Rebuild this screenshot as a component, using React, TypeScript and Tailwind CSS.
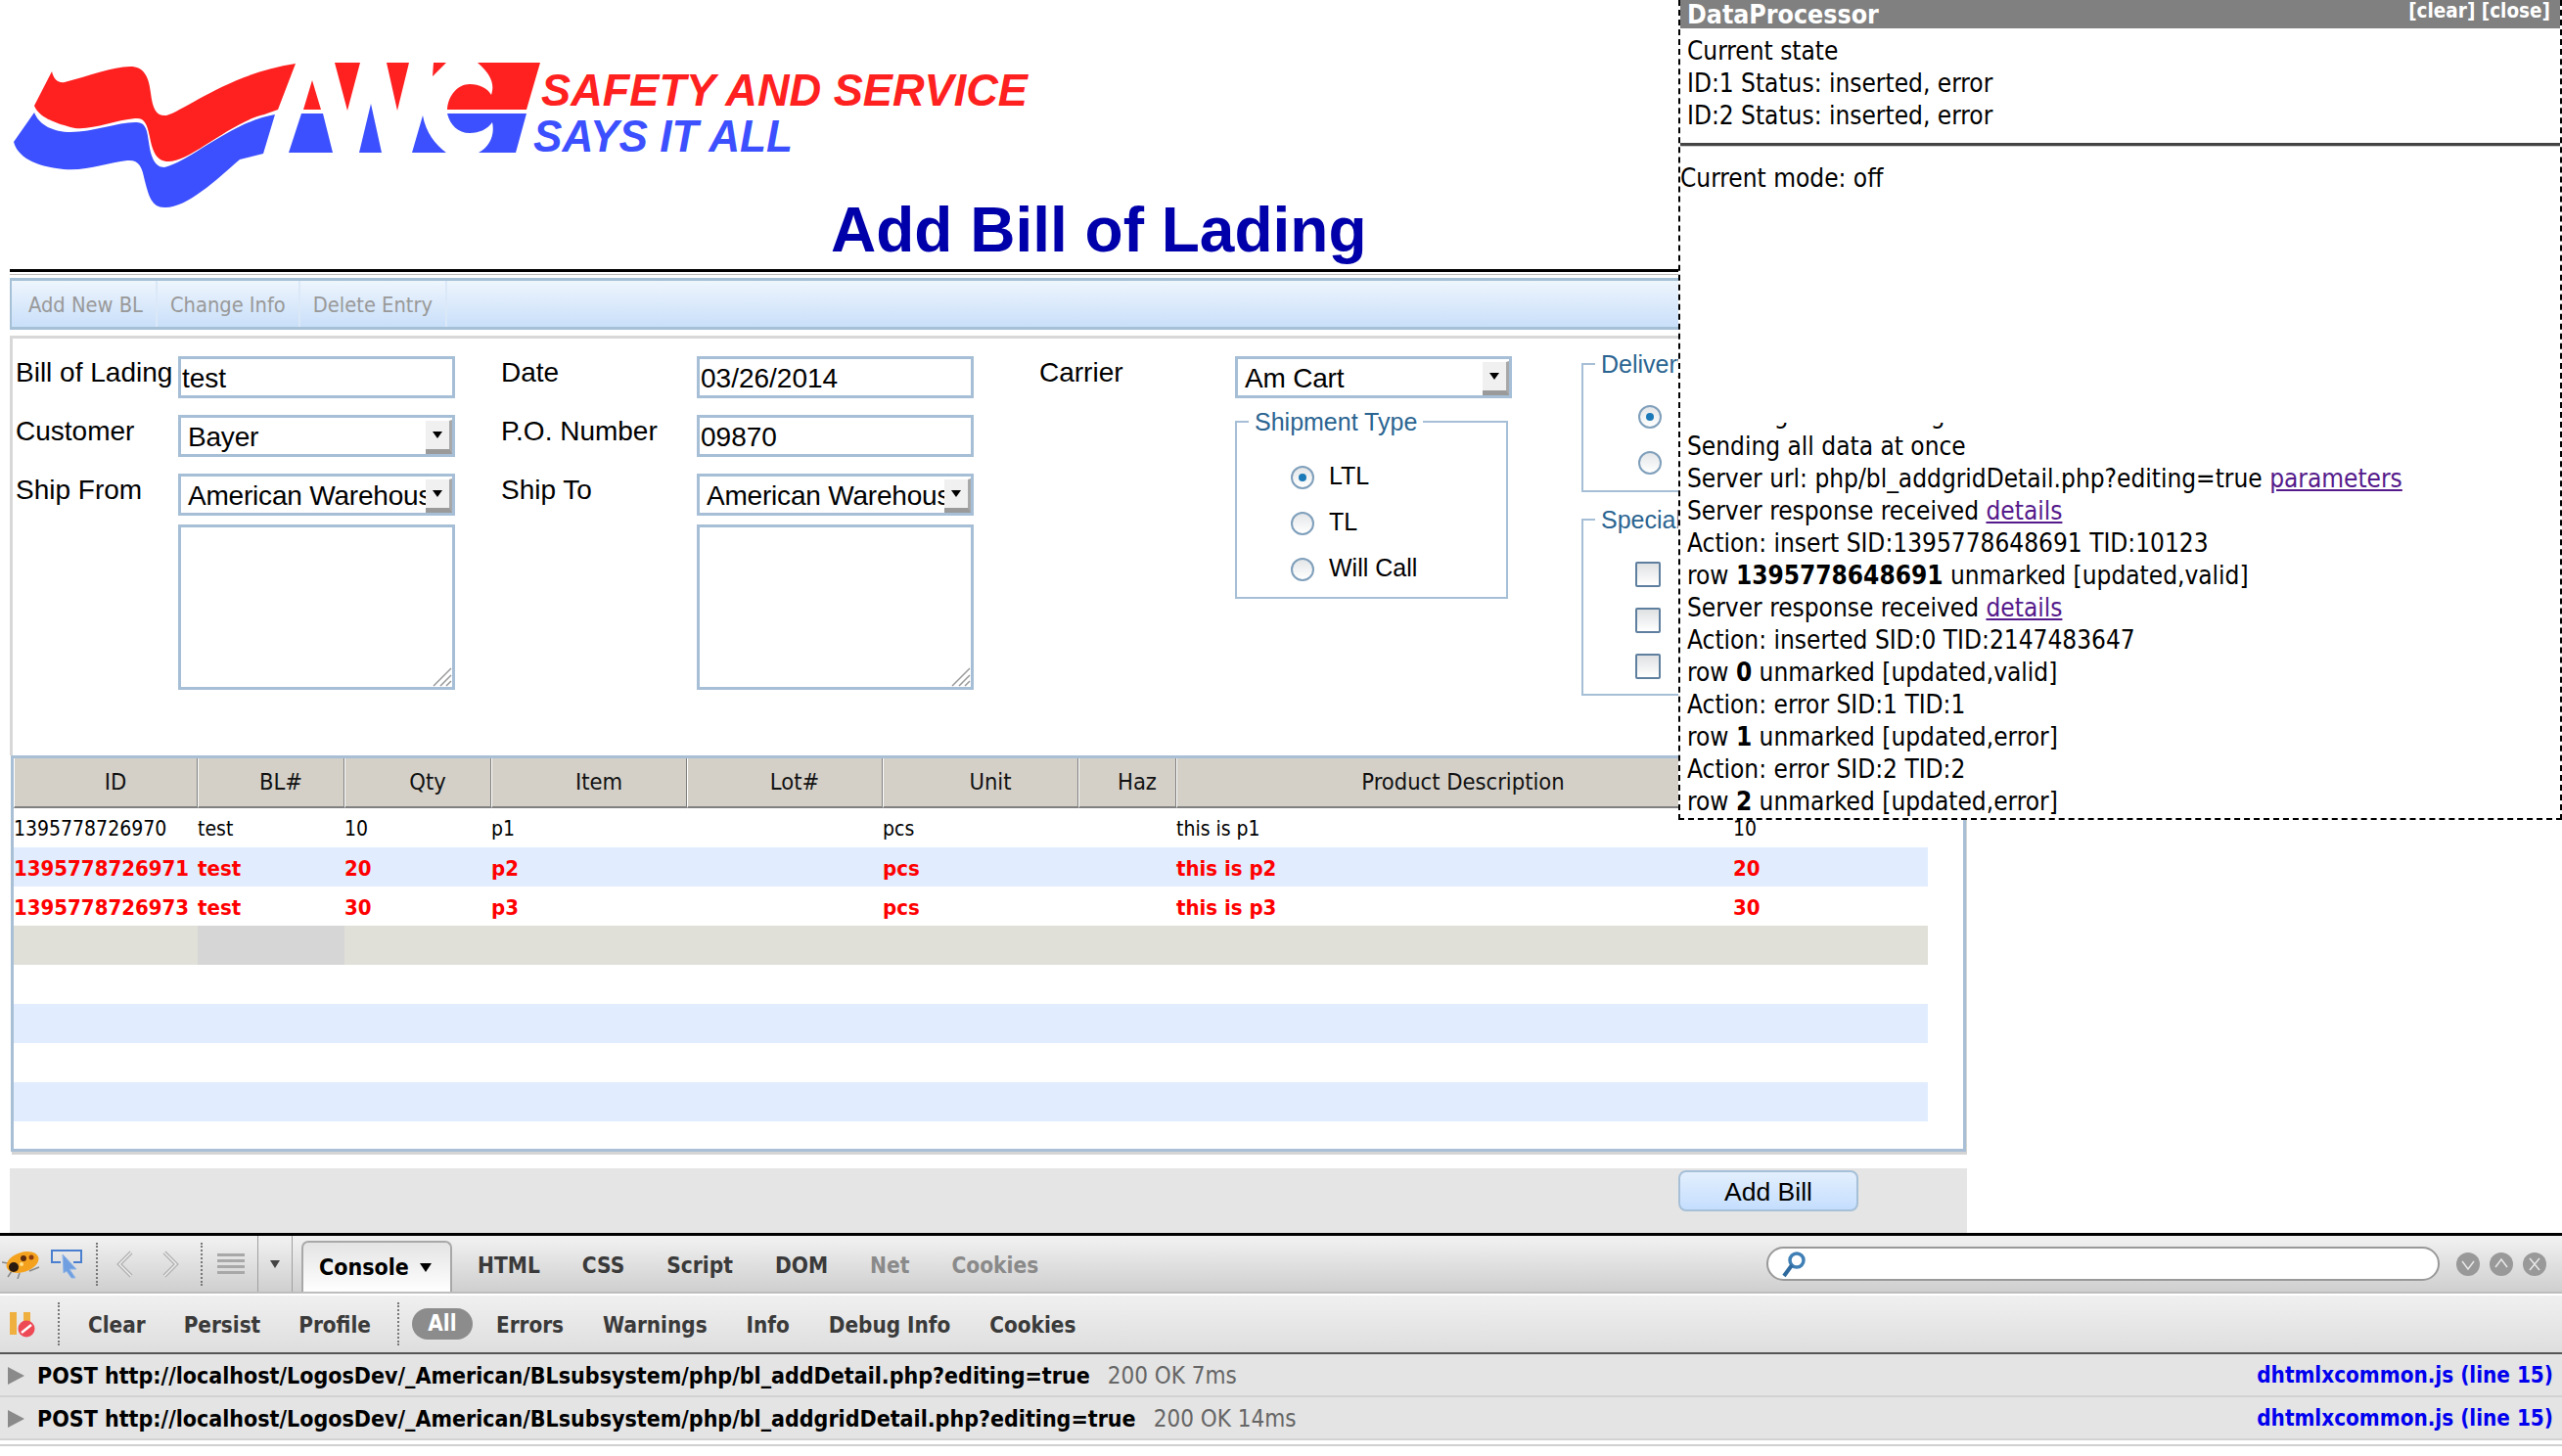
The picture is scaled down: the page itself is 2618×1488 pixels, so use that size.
import React from 'react';

const tahoma = "font-['DejaVu_Sans_Condensed','DejaVu_Sans',sans-serif]";

const columns = ['ID', 'BL#', 'Qty', 'Item', 'Lot#', 'Unit', 'Haz', 'Product Description'];

const rows = [
  { id: '1395778726970', bl: 'test', qty: '10', item: 'p1', unit: 'pcs', desc: 'this is p1', last: '10', err: false },
  { id: '1395778726971', bl: 'test', qty: '20', item: 'p2', unit: 'pcs', desc: 'this is p2', last: '20', err: true },
  { id: '1395778726973', bl: 'test', qty: '30', item: 'p3', unit: 'pcs', desc: 'this is p3', last: '30', err: true },
];

function Logo() {
  return (
    <svg width="1060" height="152" viewBox="0 64 1060 152" className="block">
      {/* waves */}
      <path fill="#ff2020" d="M53 73 C55 82 60 85 66 84 C90 78 115 68 133 68 C147 68 152 78 154 95 C156 112 160 119 170 118 C190 112 235 75 302 65 L284 112 L270 117 C235 125 195 165 172 165 C160 165 156 155 153 140 C150 125 147 120 138 121 C115 123 90 135 72 130 C55 125 40 120 35 108 Z" />
      <path fill="#3c50ff" d="M35 115 C40 128 55 135 72 135 C95 135 120 125 138 125 C148 125 150 130 152 145 C154 160 158 171 168 171 C195 165 235 125 281 117 L269 157 L245 163 C220 185 190 213 168 212 C155 212 152 200 148 185 C145 170 142 163 130 164 C110 166 90 175 65 173 C35 170 18 160 14 145 Z" />
      {/* AWC, red half */}
      <path fill="#ff2020" d="M319 82 L310 112 L328 112 Z M342 64 L368 64 L355 113 Z M395 64 L418 64 L406 113 Z M443 64 L456 64 L442 78 Z" />
      <path fill="#ff2020" d="M488 64 L552 64 L538 112 L457 112 C458 97 468 86 480 86 C490 86 498 90 502 97 C505 88 504 78 488 64 Z" />
      {/* AWC, blue half */}
      <path fill="#3c50ff" d="M308 116 L330 116 L340 156 L295 156 Z M379 106 L390 156 L367 156 Z M432 118 C435 135 445 148 456 156 L421 156 Z" />
      <path fill="#3c50ff" d="M457 116 L538 116 L527 156 L489 156 C500 150 506 138 503 125 C498 132 490 136 480 136 C468 136 460 128 457 116 Z" />
      <text x="553" y="108" fill="#ff2020" fontFamily="Liberation Sans" fontWeight="700" fontStyle="italic" fontSize="46" textLength="497" lengthAdjust="spacingAndGlyphs">SAFETY AND SERVICE</text>
      <text x="545" y="155" fill="#3c50ff" fontFamily="Liberation Sans" fontWeight="700" fontStyle="italic" fontSize="46" textLength="265" lengthAdjust="spacingAndGlyphs">SAYS IT ALL</text>
    </svg>
  );
}

function Field({ value }: { value: string }) {
  return (
    <div className="h-[43px] w-[283px] overflow-hidden border-[3px] border-[#a6bfd6] bg-white pl-[1px] text-[28px] leading-[39px]">
      {value}
    </div>
  );
}

function Select({ value }: { value: string }) {
  return (
    <div className="relative h-[43px] w-[283px] overflow-hidden border-[3px] border-[#a6bfd6] bg-white pl-[7px] text-[28px] leading-[39px] tracking-[-0.2px]">
      <span className="whitespace-nowrap">{value}</span>
      <span className="absolute right-0 top-[2px] flex h-[35px] w-[27px] items-center justify-center border-b-[5px] border-r-[3px] border-t border-b-[#9a9a9a] border-r-[#a8a8a8] border-t-white bg-[#f0f0f0]">
        <span className="h-0 w-0 border-x-[5px] border-t-[7px] border-x-transparent border-t-black" />
      </span>
    </div>
  );
}

function TextBox() {
  return (
    <div className="relative h-[169px] w-[283px] border-[3px] border-[#a6bfd6] bg-white">
      <svg width="20" height="20" viewBox="0 0 20 20" className="absolute bottom-0 right-0">
        <path d="M19 1 L1 19 M19 8 L8 19 M19 14 L14 19" stroke="#999" strokeWidth="1.5" fill="none" />
      </svg>
    </div>
  );
}

function Radio({ on }: { on?: boolean }) {
  return (
    <span className="flex h-[24px] w-[24px] shrink-0 items-center justify-center rounded-full border-[2px] border-[#7f9fbb] bg-gradient-to-b from-[#e4e6e8] to-white">
      {on && <span className="h-[8px] w-[8px] rounded-full bg-[#1d7ab8]" />}
    </span>
  );
}

function Check() {
  return <span className="block h-[26px] w-[26px] rounded-[2px] border-[2px] border-[#5f7f9f] bg-gradient-to-b from-[#dfe1e3] to-white" />;
}

function Dotted({ h }: { h: string }) {
  return <span className={`block w-0 border-l-2 border-dotted border-[#777] ${h}`} />;
}

function BugIcon() {
  return (
    <svg width="40" height="30" viewBox="0 0 40 30">
      <path d="M6 14 L0 13 M10 22 L6 28 M18 24 L16 30 M28 22 L38 18" stroke="#888" strokeWidth="1.5" />
      <ellipse cx="21" cy="13" rx="17" ry="10" transform="rotate(-18 21 13)" fill="#f4a21e" />
      <circle cx="12" cy="18" r="5" fill="#2a1a10" />
      <circle cx="22" cy="9" r="3" fill="#5a2a10" />
      <circle cx="30" cy="8" r="2.5" fill="#8a3a10" />
      <circle cx="20" cy="15" r="2" fill="#ffe08a" />
    </svg>
  );
}

function InspectIcon() {
  return (
    <svg width="32" height="30" viewBox="0 0 32 30">
      <path d="M10 13 H1 V1 H31 V13 H23" fill="none" stroke="#4a7fd0" strokeWidth="2" />
      <path d="M12 5 L26 20 L19 20 L25 29 L21 29 L16 22 L13 24 Z" fill="#6f9fe0" stroke="#8fb4e8" strokeWidth="1" />
    </svg>
  );
}

function Chevron({ left }: { left?: boolean }) {
  return (
    <svg width="18" height="28" viewBox="0 0 18 28">
      <path d={left ? 'M15 2 L3 14 L15 26' : 'M3 2 L15 14 L3 26'} fill="none" stroke="#b0b0b0" strokeWidth="4" />
      <path d={left ? 'M15 2 L3 14 L15 26' : 'M3 2 L15 14 L3 26'} fill="none" stroke="#ececec" strokeWidth="1.5" />
    </svg>
  );
}

function RoundBtn({ d }: { d: string }) {
  return (
    <svg width="24" height="24" viewBox="0 0 24 24">
      <circle cx="12" cy="12" r="12" fill="#999" />
      <path d={d} fill="none" stroke="#e8e8e8" strokeWidth="1.5" />
    </svg>
  );
}

function Firebug() {
  return (
    <div className={`${tahoma} shrink-0 border-t-[3px] border-black font-bold text-[#3a3a3a]`}>
      <div className="flex h-[59px] items-stretch border-b-[2px] border-[#bdbdbd] bg-gradient-to-b from-[#f2f2f2] to-[#cfcfcf]">
        <div className="flex w-[308px] shrink-0 items-center">
          <div className="ml-[2px] w-[50px]"><BugIcon /></div>
          <InspectIcon />
          <div className="ml-[14px]"><Dotted h="h-[44px]" /></div>
          <div className="ml-[19px]"><Chevron left /></div>
          <div className="ml-[28px]"><Chevron /></div>
          <div className="ml-[22px]"><Dotted h="h-[44px]" /></div>
          <div className="ml-[15px] flex w-[28px] flex-col gap-[3px]">
            <span className="h-[3px] bg-[#a8a8a8]" />
            <span className="h-[3px] bg-[#a8a8a8]" />
            <span className="h-[3px] bg-[#a8a8a8]" />
            <span className="h-[3px] bg-[#a8a8a8]" />
          </div>
          <span className="ml-[13px] h-full w-px bg-[#a0a0a0]" />
          <span className="ml-[12px] h-0 w-0 border-x-[5px] border-t-[8px] border-x-transparent border-t-[#444]" />
          <span className="ml-[12px] h-full w-px bg-[#a0a0a0]" />
        </div>
        <div className="mt-[5px] flex w-[154px] shrink-0 items-center gap-[11px] rounded-t-[7px] border-[2px] border-b-0 border-[#a8a8a8] bg-gradient-to-b from-[#e4e4e4] to-white pl-[16px] text-[23px] text-black">
          Console
          <span className="h-0 w-0 border-x-[6px] border-t-[9px] border-x-transparent border-t-black" />
        </div>
        <div className="ml-[26px] flex items-center gap-[43px] pt-[4px] text-[22.5px]">
          <span>HTML</span>
          <span>CSS</span>
          <span>Script</span>
          <span>DOM</span>
          <span className="text-[#8a8a8a]">Net</span>
          <span className="text-[#8a8a8a]">Cookies</span>
        </div>
        <div className="ml-auto flex items-center pr-[16px]">
          <div className="relative h-[35px] w-[688px] rounded-full border-[2px] border-[#999] bg-white">
            <svg width="26" height="28" viewBox="0 0 26 28" className="absolute left-[13px] top-[2px]">
              <circle cx="16" cy="10" r="7" fill="#fff" stroke="#3f7fb5" strokeWidth="3.5" />
              <path d="M11 15 L3 26" stroke="#2f6a9f" strokeWidth="4" />
            </svg>
          </div>
          <div className="ml-[17px] flex gap-[10px]">
            <RoundBtn d="M6 9 L12 17 L18 9" />
            <RoundBtn d="M6 15 L12 7 L18 15" />
            <RoundBtn d="M7 6 L17 18 M17 6 L7 18" />
          </div>
        </div>
      </div>
      <div className="mt-[2px] flex h-[58px] items-center bg-gradient-to-b from-[#f0f0f0] to-[#dedede] text-[22.3px]">
        <svg width="28" height="28" viewBox="0 0 28 28" className="ml-[8px]">
          <rect x="2" y="2" width="7" height="23" fill="#f0b040" />
          <rect x="16" y="2" width="7" height="23" fill="#f0b040" />
          <circle cx="19" cy="19" r="8.5" fill="#ee4a55" />
          <path d="M14 23 L24 15" stroke="#fff" strokeWidth="2.5" />
        </svg>
        <div className="ml-[23px]"><Dotted h="h-[44px]" /></div>
        <div className="ml-[29px] flex items-center gap-[39px] pt-[3px]">
          <span>Clear</span>
          <span>Persist</span>
          <span>Profile</span>
        </div>
        <div className="ml-[27px]"><Dotted h="h-[44px]" /></div>
        <span className="ml-[13px] flex h-[32px] w-[62px] items-center justify-center rounded-full bg-[#8c8c8c] text-white">All</span>
        <div className="ml-[24px] flex items-center gap-[40px] pt-[3px]">
          <span>Errors</span>
          <span>Warnings</span>
          <span>Info</span>
          <span>Debug Info</span>
          <span>Cookies</span>
        </div>
      </div>
      <div className="border-t-[2px] border-[#555] text-[23px] text-black">
        <LogRow url="POST http://localhost/LogosDev/_American/BLsubsystem/php/bl_addDetail.php?editing=true" status="200 OK 7ms" />
        <LogRow url="POST http://localhost/LogosDev/_American/BLsubsystem/php/bl_addgridDetail.php?editing=true" status="200 OK 14ms" />
      </div>
      <div className="mt-[4px] h-[2px] bg-[#d0d0d0]" />
    </div>
  );
}

function LogRow({ url, status }: { url: string; status: string }) {
  return (
    <div className="flex h-[44px] items-center border-b-[2px] border-[#d2d2d2] bg-[#e4e4e4] pl-[8px] pr-[9px] pt-[2px]">
      <span className="h-0 w-0 border-y-[9px] border-l-[17px] border-y-transparent border-l-[#8a8a8a]" />
      <span className="ml-[13px] whitespace-nowrap">{url}</span>
      <span className="ml-[18px] text-[24px] font-normal text-[#666]">{status}</span>
      <span className="ml-auto text-[22.3px] text-[#0000ee]">dhtmlxcommon.js (line 15)</span>
    </div>
  );
}

function DebugPanel() {
  const link = 'text-[#551a8b] underline';
  return (
    <div className={`${tahoma} absolute right-0 top-0 flex h-[838px] w-[903px] flex-col border-x-2 border-b-2 border-dashed border-black bg-white text-[26px] leading-[33px] text-black`}>
      <div className="flex h-[29px] shrink-0 justify-between bg-[#808080] pl-[7px] pr-[10px] font-bold text-white">
        <span className="text-[26.5px] leading-[29px]">DataProcessor</span>
        <span className="text-[20.5px] leading-[22px]">[clear] [close]</span>
      </div>
      <div className="h-[120px] shrink-0 border-b-[3px] border-[#444] pl-[7px] pt-[7px]">
        <div>Current state</div>
        <div>ID:1 Status: inserted, error</div>
        <div>ID:2 Status: inserted, error</div>
      </div>
      <div className="h-px shrink-0 bg-[#ccc]" />
      <div className="mt-[16px] flex-1">Current mode: off</div>
      <div className="flex h-[404px] shrink-0 flex-col justify-end overflow-hidden pl-[7px]">
        <div>Initiating data sending</div>
        <div>Sending all data at once</div>
        <div>Server url: php/bl_addgridDetail.php?editing=true <a className={link}>parameters</a></div>
        <div>Server response received <a className={link}>details</a></div>
        <div>Action: insert SID:1395778648691 TID:10123</div>
        <div>row <b>1395778648691</b> unmarked [updated,valid]</div>
        <div>Server response received <a className={link}>details</a></div>
        <div>Action: inserted SID:0 TID:2147483647</div>
        <div>row <b>0</b> unmarked [updated,valid]</div>
        <div>Action: error SID:1 TID:1</div>
        <div>row <b>1</b> unmarked [updated,error]</div>
        <div>Action: error SID:2 TID:2</div>
        <div>row <b>2</b> unmarked [updated,error]</div>
      </div>
    </div>
  );
}

export default function App() {
  return (
    <div className="relative flex h-[1488px] w-[2618px] flex-col overflow-hidden bg-white font-['Liberation_Sans',Arial,sans-serif] text-black">
      {/* header */}
      <header className="h-[275px] shrink-0 pt-[64px]">
        <Logo />
        <h1 className="ml-[849px] mt-[-18px] whitespace-nowrap text-[64px] font-bold leading-[74px] text-[#0000aa]">Add Bill of Lading</h1>
      </header>

      <div className="w-[2010px] shrink-0 pl-[10px]">
        <div className="h-[3px] bg-black" />
        <div className="h-[3px] border-b border-[#bbb]" />

        {/* toolbar */}
        <div className={`${tahoma} mt-[3px] flex h-[53px] items-stretch border-y-[3px] border-l-2 border-[#a6c0d6] bg-gradient-to-b from-[#eef5fd] to-[#c9dff9] pl-[17px] text-[21.7px] text-[#999]`}>
          <div className="flex items-center border-r-2 border-[#dbe8f7] pr-[13px] pt-[4px]">Add New BL</div>
          <div className="flex items-center border-r-2 border-[#dbe8f7] px-[13px] pt-[4px]">Change Info</div>
          <div className="flex items-center border-r-2 border-[#dbe8f7] px-[13px] pt-[4px]">Delete Entry</div>
        </div>

        {/* form */}
        <div className="mt-[6px] h-[429px] border-l-[3px] border-t-[3px] border-[#d8d8d8] text-[28px]">
          <div className="flex pt-[18px]">
            <div className="grid w-[982px] shrink-0 grid-cols-[169px_330px_200px_283px] content-start gap-y-[17px]">
              <div className="pl-[3px] leading-[34px]">Bill of Lading</div>
              <Field value="test" />
              <div className="leading-[34px]">Date</div>
              <Field value="03/26/2014" />
              <div className="pl-[3px] leading-[34px]">Customer</div>
              <Select value="Bayer" />
              <div className="leading-[34px]">P.O. Number</div>
              <Field value="09870" />
              <div className="pl-[3px] leading-[34px]">Ship From</div>
              <Select value="American Warehouse" />
              <div className="leading-[34px]">Ship To</div>
              <Select value="American Warehouse" />
              <div className="-mt-[8px]" />
              <div className="-mt-[8px]"><TextBox /></div>
              <div className="-mt-[8px]" />
              <div className="-mt-[8px]"><TextBox /></div>
            </div>
            <div className="ml-[67px] w-[200px] shrink-0 leading-[34px]">Carrier</div>
            <div className="w-[354px] shrink-0">
              <Select value="Am Cart" />
              <fieldset className="mt-[10px] h-[195px] w-[279px] border-[2px] border-[#a6bfd6] pl-[12px]">
                <legend className="px-[6px] text-[25px] leading-[28px] text-[#2b6491]">Shipment Type</legend>
                <div className="flex flex-col gap-[20px] pl-[43px] pt-[29px]">
                  <label className="flex items-center gap-[15px] text-[25px] leading-[24px]"><Radio on /><span className="mb-[3px]">LTL</span></label>
                  <label className="flex items-center gap-[15px] text-[25px] leading-[24px]"><Radio /><span className="mb-[3px]">TL</span></label>
                  <label className="flex items-center gap-[15px] text-[25px] leading-[24px]"><Radio /><span className="mb-[3px]">Will Call</span></label>
                </div>
              </fieldset>
            </div>
            <div className="w-[120px] shrink-0">
              <fieldset className="-mt-[6px] h-[145px] border-[2px] border-[#a6bfd6] pl-[12px]">
                <legend className="px-[6px] text-[25px] leading-[28px] text-[#2b6491]">Delivery</legend>
                <div className="flex flex-col gap-[23px] pl-[44px] pt-[28px]">
                  <Radio on />
                  <Radio />
                </div>
              </fieldset>
              <fieldset className="mt-[14px] h-[194px] border-[2px] border-[#a6bfd6] pl-[12px]">
                <legend className="px-[6px] text-[25px] leading-[28px] text-[#2b6491]">Special</legend>
                <div className="flex flex-col gap-[21px] pl-[41px] pt-[29px]">
                  <Check />
                  <Check />
                  <Check />
                </div>
              </fieldset>
            </div>
          </div>
        </div>

        {/* grid */}
        <div className={`${tahoma} ml-[1px] mr-[1px] h-[405px] border-[3px] border-[#a8bfd5] bg-white text-[21px] shadow-[1px_3px_0_#d4d4d4]`}>
          <div className="flex h-[51px] bg-[#d4d0c8] text-[23.5px] text-[#111]">
            {columns.map((c, i) => (
              <div
                key={c}
                className={`flex items-center justify-center border-b-2 border-l border-r border-b-[#808080] border-l-white border-r-[#808080] ${
                  i === 0 ? 'w-[188px] pl-[20px]' : i === 1 || i === 2 ? 'w-[150px] pl-[20px]' : i === 6 ? 'w-[100px] pl-[20px]' : i === 7 ? 'w-[586px]' : 'w-[200px] pl-[20px]'
                }`}
              >
                {c}
              </div>
            ))}
            <div className="flex-1 border-b-2 border-b-[#808080]" />
          </div>
          <div className="w-[1956px]">
            {rows.map((r, i) => (
              <div key={r.id} className={`grid h-[40px] grid-cols-[188px_150px_150px_200px_200px_300px_569px_199px] items-center pt-[3px] ${i === 1 ? 'bg-[#e1edfe]' : 'bg-white'} ${r.err ? 'text-[22px] font-bold text-[#ff0000]' : ''}`}>
                <span>{r.id}</span>
                <span>{r.bl}</span>
                <span>{r.qty}</span>
                <span>{r.item}</span>
                <span />
                <span>{r.unit}</span>
                <span>{r.desc}</span>
                <span>{r.last}</span>
              </div>
            ))}
            <div className="h-[40px] bg-[#e0e0d8] pl-[188px]">
              <div className="h-full w-[150px] bg-[#d6d6d6]" />
            </div>
            <div className="h-[40px]" />
            <div className="h-[40px] bg-[#e1edfe]" />
            <div className="h-[40px]" />
            <div className="h-[40px] bg-[#e1edfe]" />
          </div>
        </div>

        {/* footer */}
        <div className="mt-[17px] flex h-[66px] items-start bg-[#e5e5e5] pl-[1705px] pt-[2px]">
          <button className="h-[42px] w-[184px] rounded-[8px] border-2 border-[#a6c0d8] bg-gradient-to-b from-[#e3effd] to-[#c5defe] pt-[2px] text-[26.5px] leading-none">Add Bill</button>
        </div>
      </div>

      <Firebug />
      <DebugPanel />
    </div>
  );
}
